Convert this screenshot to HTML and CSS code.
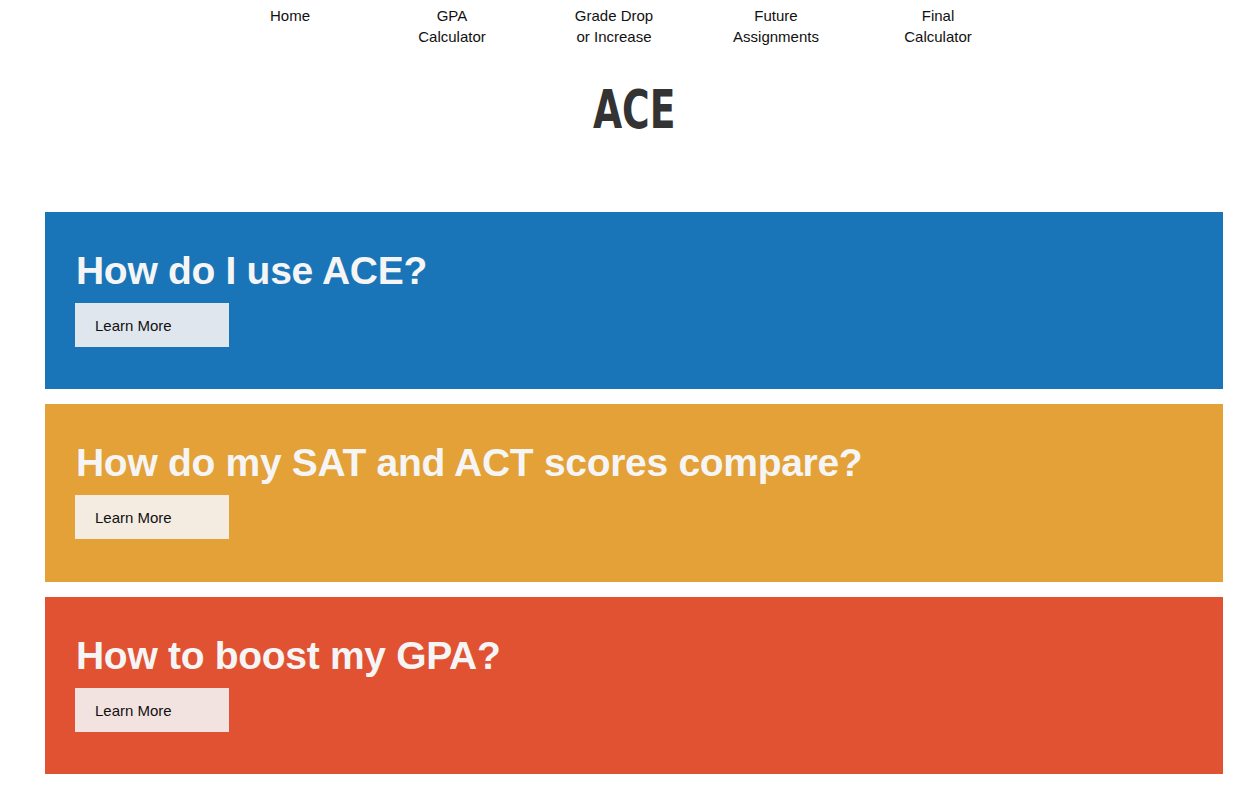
FILE: index.html
```html
<!DOCTYPE html>
<html>
<head>
<meta charset="utf-8">
<title>ACE</title>
<link rel="stylesheet" href="styles.css">
</head>
<body>
<nav class="nav">
  <a class="nav-item" href="#">Home</a>
  <a class="nav-item" href="#">GPA<br>Calculator</a>
  <a class="nav-item" href="#">Grade Drop<br>or Increase</a>
  <a class="nav-item" href="#">Future<br>Assignments</a>
  <a class="nav-item" href="#">Final<br>Calculator</a>
</nav>
<main class="container">
  <header class="brand"><span class="logo">ACE</span></header>
  <section class="panel panel-blue">
    <h2 class="panel-title">How do I use ACE?</h2>
    <a class="btn" href="#">Learn More</a>
  </section>
  <section class="panel panel-orange">
    <h2 class="panel-title">How do my SAT and ACT scores compare?</h2>
    <a class="btn" href="#">Learn More</a>
  </section>
  <section class="panel panel-red">
    <h2 class="panel-title">How to boost my GPA?</h2>
    <a class="btn" href="#">Learn More</a>
  </section>
</main>
</body>
</html>
```
FILE: styles.css
```css
html, body {
  margin: 0;
  padding: 0;
  background: #ffffff;
  font-family: "Liberation Sans", Arial, sans-serif;
  color: #111;
}

.nav {
  display: flex;
  padding: 5px 0 0 209px;
}

.nav-item {
  width: 162px;
  text-align: center;
  font-size: 15px;
  line-height: 21px;
  color: #111;
  text-decoration: none;
}

.container {
  padding: 0 29px 0 45px;
  display: flex;
  flex-direction: column;
  gap: 15px;
}

.brand {
  display: flex;
  justify-content: center;
  height: 150px;
}

.logo {
  display: inline-block;
  margin-top: 33px;
  font-family: "Liberation Sans Narrow", "DejaVu Sans Condensed", sans-serif;
  font-weight: bold;
  font-size: 53px;
  line-height: 60px;
  color: #333;
  transform: scaleX(0.79);
}

.panel {
  padding: 36px 30px 42px;
  height: 177px;
  box-sizing: border-box;
}

.panel-blue { background: #1a74b8; }
.panel-orange { background: #e3a137; height: 178px; }
.panel-red { background: #e15232; }

.panel-title {
  margin: 0 0 9px 1px;
  font-size: 39px;
  line-height: 46px;
  letter-spacing: -0.3px;
  font-weight: bold;
  color: #f5f5f5;
}

.btn {
  display: flex;
  align-items: center;
  width: 154px;
  height: 44px;
  box-sizing: border-box;
  padding: 0 20px;
  font-size: 15px;
  color: #111;
  text-decoration: none;
}

.panel-blue .btn { background: #dfe6ee; }
.panel-orange .btn { background: #f4ebe1; }
.panel-red .btn { background: #f3e3e0; }
```
